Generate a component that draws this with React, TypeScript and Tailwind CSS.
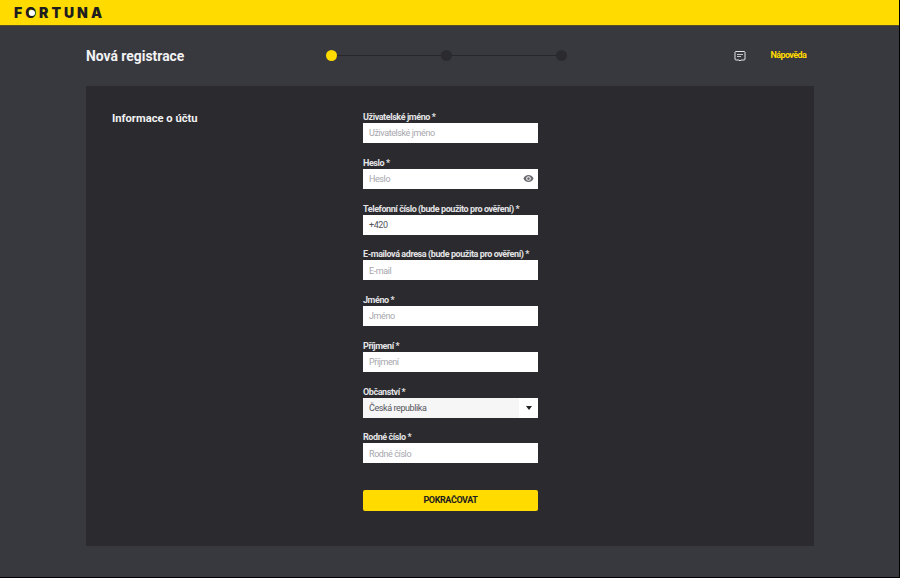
type Field = {
  label: string;
  placeholder?: string;
  value?: string;
  kind?: "password" | "select";
};

const fields: Field[] = [
  { label: "Uživatelské jméno *", placeholder: "Uživatelské jméno" },
  { label: "Heslo *", placeholder: "Heslo", kind: "password" },
  { label: "Telefonní číslo (bude použito pro ověření) *", value: "+420" },
  { label: "E-mailová adresa (bude použita pro ověření) *", placeholder: "E-mail" },
  { label: "Jméno *", placeholder: "Jméno" },
  { label: "Příjmení *", placeholder: "Příjmení" },
  { label: "Občanství *", value: "Česká republika", kind: "select" },
  { label: "Rodné číslo *", placeholder: "Rodné číslo" },
];

function Logo() {
  return (
    <div className="flex items-center text-[14px] leading-none font-black tracking-[3px] text-[#1d1d1f] font-['Inter',sans-serif]">
      F
      <span className="relative">
        O
        <span className="absolute left-[3.5px] top-[4px] h-[6px] w-[6px] rounded-full bg-white" />
      </span>
      RTUNA
    </div>
  );
}

function FormField({ field }: { field: Field }) {
  return (
    <div className="h-[45.75px]">
      <div className="h-[12px] text-[9px] leading-[12px] font-bold tracking-[-0.42px] text-[#e4e4e6]">{field.label}</div>
      <div className="flex h-[20px] w-[175px] items-center bg-white text-[9px] tracking-[-0.41px]">
        <span
          className={`flex h-full flex-1 items-center pl-[6px] pt-[2px] ${field.value ? "text-[#55555c]" : "text-[#a6a6ac]"} ${
            field.kind === "select" ? "bg-[#f6f6f6]" : ""
          }`}
        >
          {field.value ?? field.placeholder}
        </span>
        {field.kind === "password" && (
          <svg viewBox="0 0 24 24" className="mr-[4px] h-[11px] w-[11px]" fill="#6a6a70">
            <path d="M12 4.500C7 4.500 2.730 7.610 1 12c1.730 4.390 6 7.500 11 7.500s9.270-3.110 11-7.500c-1.730-4.390-6-7.500-11-7.500zM12 17c-2.760 0-5-2.240-5-5s2.240-5 5-5 5 2.240 5 5-2.240 5-5 5zm0-8c-1.660 0-3 1.340-3 3s1.340 3 3 3 3-1.340 3-3-1.340-3-3-3z" />
          </svg>
        )}
        {field.kind === "select" && (
          <span className="flex h-full w-[19px] items-center justify-center">
            <span className="h-0 w-0 border-x-[3.5px] border-t-[4px] border-x-transparent border-t-[#222226]" />
          </span>
        )}
      </div>
    </div>
  );
}

export default function App() {
  return (
    <div className="flex h-[578px] w-[900px] flex-col overflow-hidden border-r border-b border-black bg-[#38383f] font-['Roboto',sans-serif]">
      <header className="flex h-[26px] shrink-0 items-center border-b border-[#55502a] bg-[#ffdb00] pl-[14px]">
        <Logo />
      </header>

      <div className="flex h-[60px] shrink-0 items-center pl-[86px]">
        <h1 className="w-[240px] pt-[1px] text-[13.9px] font-bold text-[#f2f2f3]">Nová registrace</h1>

        <div className="mb-[1px] flex w-[241px] items-center">
          <span className="h-[11px] w-[11px] shrink-0 rounded-full bg-[#ffdb00]" />
          <span className="h-px flex-1 bg-[#26262b]" />
          <span className="h-[11px] w-[11px] shrink-0 rounded-full bg-[#2a2a2f]" />
          <span className="h-px flex-1 bg-[#26262b]" />
          <span className="h-[11px] w-[11px] shrink-0 rounded-full bg-[#2a2a2f]" />
        </div>

        <svg viewBox="0 0 12 12" className="mb-[1px] ml-[167px] h-[12px] w-[12px]" fill="none">
          <path d="M2 1.500h8a1 1 0 0 1 1 1v6.500a1 1 0 0 1-1 1H7l-1 1-1-1H2a1 1 0 0 1-1-1V2.500a1 1 0 0 1 1-1z" stroke="#e4e4e6" strokeWidth="1" />
          <path d="M3 4.500h6M3 6.500h4" stroke="#c4c4c8" strokeWidth="1" />
        </svg>
        <span className="ml-[24.500px] text-[9px] font-bold tracking-[-0.6px] text-[#ffdb00]">Nápověda</span>
      </div>

      <main className="ml-[86px] flex h-[460px] w-[728px] bg-[#2a2a2f]">
        <h2 className="w-[277px] pl-[26px] pt-[25px] text-[11.2px] leading-[16px] font-bold text-[#f2f2f3]">
          Informace o účtu
        </h2>

        <div className="pt-[25px]">
          {fields.map((f) => (
            <FormField key={f.label} field={f} />
          ))}
          <button className="mt-[13px] h-[21px] w-[175px] rounded-[2px] bg-[#ffdb00] text-[9px] font-bold tracking-[-0.4px] text-[#1d1d1f]">
            POKRAČOVAT
          </button>
        </div>
      </main>
    </div>
  );
}
